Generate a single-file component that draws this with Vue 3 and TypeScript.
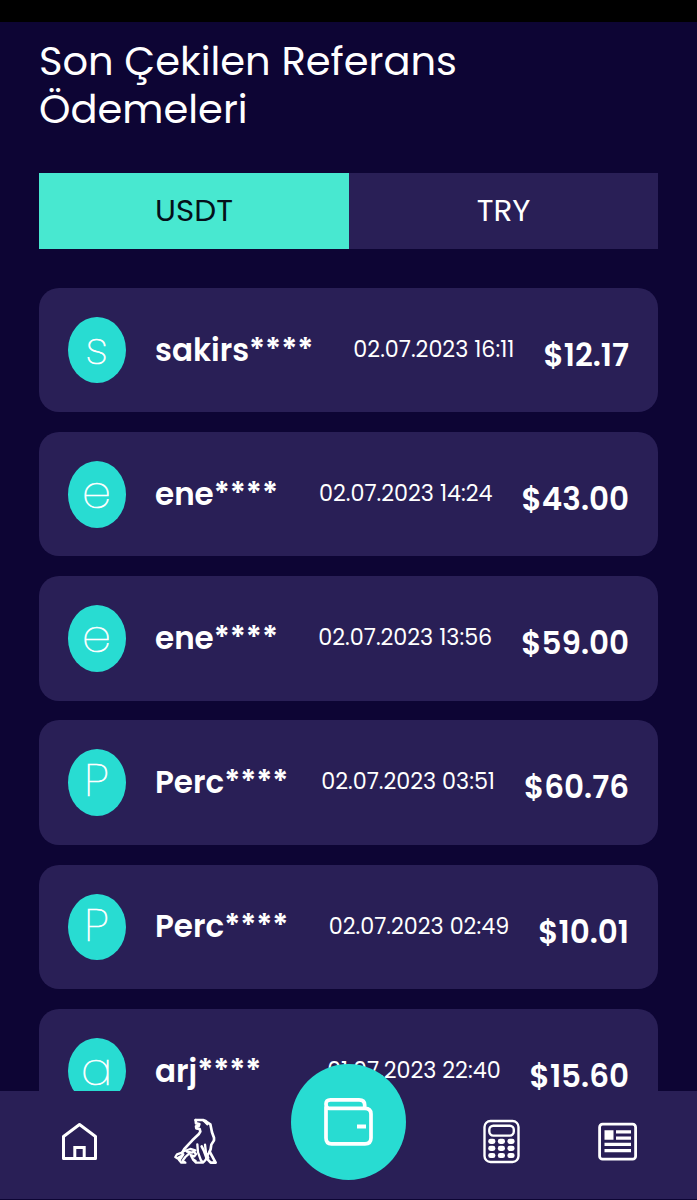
<script setup lang="ts">
import { ref } from 'vue'

interface Payment {
  initial: string
  name: string
  date: string
  amount: string
}

const tabs = ['USDT', 'TRY']
const active = ref('USDT')

const payments: Payment[] = [
  { initial: 's', name: 'sakirs****', date: '02.07.2023 16:11', amount: '$12.17' },
  { initial: 'e', name: 'ene****', date: '02.07.2023 14:24', amount: '$43.00' },
  { initial: 'e', name: 'ene****', date: '02.07.2023 13:56', amount: '$59.00' },
  { initial: 'P', name: 'Perc****', date: '02.07.2023 03:51', amount: '$60.76' },
  { initial: 'P', name: 'Perc****', date: '02.07.2023 02:49', amount: '$10.01' },
  { initial: 'a', name: 'arj****', date: '01.07.2023 22:40', amount: '$15.60' },
]
</script>

<template>
  <div class="screen">
    <div class="status"></div>
    <main>
      <h1>Son Çekilen Referans Ödemeleri</h1>

      <div class="tabs">
        <button
          v-for="tab in tabs"
          :key="tab"
          :class="{ active: active === tab }"
          @click="active = tab"
        >
          {{ tab }}
        </button>
      </div>

      <ul>
        <li v-for="(p, i) in payments" :key="i">
          <div class="avatar">{{ p.initial }}</div>
          <div class="name">{{ p.name }}</div>
          <div class="date">{{ p.date }}</div>
          <div class="amount">{{ p.amount }}</div>
        </li>
      </ul>
    </main>

    <nav>
      <a class="item">
        <svg width="60" height="70" viewBox="0 0 60 70" fill="none" stroke="#fff" stroke-width="3">
          <path d="M13.5 53.5V31.5L29.5 19.5L45.5 31.5V53.5Z" stroke-linejoin="round" />
          <path d="M24.8 53V42.5H34.2V53" />
        </svg>
      </a>
      <a class="item lion">
        <svg width="65" height="70" viewBox="0 0 195 210" fill="none" stroke="#fff" stroke-width="8" stroke-linejoin="round" stroke-linecap="round">
          <path d="M92 45H114L122 48L128 53L136 58L139 72L141 82L147 98V106L139 119L137 132L134 140L147 164L152 173H137L125 160L117 138L110 124" />
          <path d="M92 45L93 55L103 57L101 63L93 64L94 70L104 72L106 80L101 88L82 106L70 119L58 132L51 144" />
          <path d="M114 46L127 59" stroke-width="5" />
          <path d="M51 143L36 148L31 156L37 160L49 153L55 148L43 166L39 160M43 166L49 173H61L53 167L61 156L73 145" stroke-width="7" />
          <path d="M59 138L76 132L91 136L81 143L66 140M86 140L93 147L88 154L77 150L84 163L92 168" stroke-width="7" />
          <path d="M97 118L99 142L107 164L114 173H93L85 165M120 119L123 144L130 158M134 139L122 164L116 171" stroke-width="7" />
        </svg>
      </a>
      <a class="wallet">
        <svg width="80" height="80" viewBox="0 0 80 80" fill="none" stroke="#fff" stroke-width="3.7">
          <path d="M16 26.5V58Q16 63.8 21.5 63.8H55Q61 63.8 61 58V34Q61 28.3 55 28.3H19Q16 28.3 16 24Q16 19.8 20.5 19.8H49Q54.7 19.8 54.7 25V28" />
          <path d="M47 46.5H56" stroke-width="4" />
        </svg>
      </a>
      <a class="item calc">
        <svg width="60" height="70" viewBox="0 0 60 70">
          <rect x="14.5" y="16" width="34" height="41" rx="6" fill="none" stroke="#fff" stroke-width="2.4" />
          <rect x="19.3" y="20.8" width="24.5" height="9.8" rx="4" fill="none" stroke="#fff" stroke-width="2.4" />
          <g fill="#fff">
            <template v-for="row in 3" :key="row">
              <rect v-for="col in 3" :key="col" :x="8.6 + col * 9.6" :y="26.6 + row * 7.1" width="7.2" height="5.2" rx="2.4" />
            </template>
          </g>
        </svg>
      </a>
      <a class="item news">
        <svg width="60" height="70" viewBox="0 0 60 70">
          <rect x="12.6" y="19.2" width="36" height="35" rx="3" fill="none" stroke="#fff" stroke-width="2.8" />
          <path d="M17.5 25.2h9v9.5h-9zM29 25.2h15v3.2H29zM29 31.5h15v3.2H29zM17.5 37.8h26.5v3.2H17.5zM17.5 44h26.5v3.2H17.5z" fill="#fff" />
        </svg>
      </a>
    </nav>
  </div>
</template>

<style>
body {
  background: #0d0534;
  overflow: hidden;
}
</style>

<style scoped>
.screen {
  position: relative;
  height: 1200px;
  overflow: hidden;
  box-sizing: border-box;
  background: #0d0534;
  color: #fff;
  font-family: Poppins, Inter, 'Open Sans', sans-serif;
}
.status {
  height: 22px;
  background: #000;
}
main {
  padding: 16px 39px 0;
}
h1 {
  margin: 0;
  height: 135px;
  width: 520px;
  font-size: 40px;
  font-weight: 400;
  line-height: 47.8px;
}
.tabs {
  display: grid;
  grid-template-columns: 310px 309px;
  height: 76px;
}
.tabs button {
  border: 0;
  padding: 0 0 2px;
  background: #291f56;
  color: #fff;
  font: inherit;
  font-size: 31px;
  font-weight: 400;
}
.tabs button.active {
  background: #48e8d0;
  color: #04101a;
}
ul {
  list-style: none;
  margin: 38.8px 0 0;
  padding: 0;
  display: flex;
  flex-direction: column;
  gap: 19.8px;
}
li {
  display: flex;
  align-items: flex-start;
  box-sizing: border-box;
  height: 124.4px;
  padding: 0 29px;
  border-radius: 20px;
  background: #291f56;
  line-height: 40px;
  white-space: nowrap;
}
.avatar {
  width: 58px;
  height: 66.6px;
  margin-top: 29px;
  border-radius: 50%;
  background: #28dcd2;
  text-align: center;
  font-size: 46px;
  font-weight: 200;
  line-height: 63px;
  text-indent: -1px;
  -webkit-text-stroke: 0.7px #fff;
}
.name {
  margin: 41.8px auto 0 29px;
  font-size: 31px;
  font-weight: 600;
}
.date {
  margin: 42px 29px 0 0;
  font-size: 22.25px;
  font-weight: 400;
}
.amount {
  margin-top: 47px;
  font-size: 31px;
  font-weight: 600;
}
nav {
  position: absolute;
  left: 0;
  right: 0;
  bottom: 1px;
  height: 108px;
  box-sizing: border-box;
  padding: 14px 50px 0;
  display: flex;
  align-items: flex-start;
  background: #291f56;
}
nav svg {
  display: block;
}
.lion {
  margin-left: 55px;
}
.wallet {
  width: 116px;
  height: 116px;
  margin: -41px 0 0 60.5px;
  border-radius: 50%;
  background: #28dcd2;
}
.wallet svg {
  margin: 16px 0 0 19.5px;
}
.calc {
  margin-left: 64.5px;
}
.news {
  margin-left: 57px;
}
</style>
